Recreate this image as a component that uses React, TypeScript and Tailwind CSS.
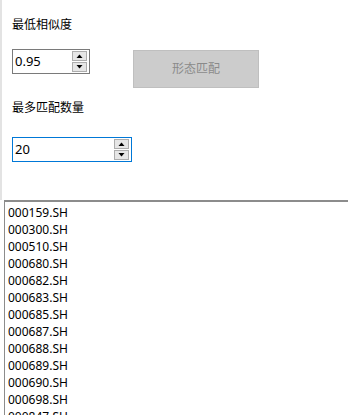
import React from 'react';

const codes = [
  '000159.SH', '000300.SH', '000510.SH', '000680.SH', '000682.SH', '000683.SH',
  '000685.SH', '000687.SH', '000688.SH', '000689.SH', '000690.SH', '000698.SH',
  '000847.SH',
];

const Arrow: React.FC<{ up?: boolean }> = ({ up }) => (
  <svg width="7" height="4" viewBox="0 0 7 4">
    {up ? <polygon points="0.5,4 6.5,4 3.5,0.5" fill="#000" /> : <polygon points="0.5,0 6.5,0 3.5,3.5" fill="#000" />}
  </svg>
);

const Spinner: React.FC = () => (
  <div className="flex flex-col gap-[1px] w-[15px]">
    <div className="h-[10px] bg-[#e6e6e6] border border-[#adadad] flex items-center justify-center">
      <Arrow up />
    </div>
    <div className="h-[10px] bg-[#e6e6e6] border border-[#adadad] flex items-center justify-center">
      <Arrow />
    </div>
  </div>
);

const NumBox: React.FC<{ value: string; width: string; focused?: boolean }> = ({ value, width, focused }) => (
  <div
    className={`${width} h-[25px] border bg-white flex items-start justify-between pt-[1px] pr-[2px] ${
      focused ? 'border-[#0078d7]' : 'border-[#7a7a7a]'
    }`}
  >
    <span className="pl-[2px] text-[13px] leading-[21px] text-black">{value}</span>
    <Spinner />
  </div>
);

const App: React.FC = () => {
  return (
    <div
      className="w-[348px] h-[415px] overflow-hidden bg-white flex flex-col text-black"
      style={{ fontFamily: '"Noto Sans", "Noto Sans CJK SC", sans-serif' }}
    >
      <div className="h-[200px] shrink-0 border-l-2 border-[#e3e3e3] pl-[10px] pt-[17px] flex flex-col">
        <div className="text-[12px] leading-[16px] h-[16px]">最低相似度</div>
        <div className="mt-[16px] flex items-start">
          <NumBox value="0.95" width="w-[78px]" />
          <div className="ml-[43px] mt-[1px] w-[126px] h-[38px] bg-[#cccccc] border border-[#bfbfbf] flex items-center justify-center text-[12px] text-[#8a8a8a]">
            形态匹配
          </div>
        </div>
        <div className="mt-[12px] text-[12px] leading-[16px] h-[16px]">最多匹配数量</div>
        <div className="mt-[21px]">
          <NumBox value="20" width="w-[120px]" focused />
        </div>
      </div>
      <div className="flex-1 ml-[4px] border-t-2 border-l border-[#8c8c8c] pt-[2px] pl-[3px] overflow-hidden">
        {codes.map((c) => (
          <div key={c} className="text-[12px] leading-[17px] h-[17px]">
            {c}
          </div>
        ))}
      </div>
    </div>
  );
};

export default App;
